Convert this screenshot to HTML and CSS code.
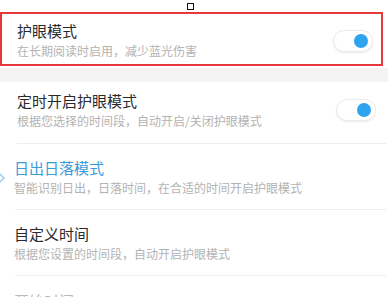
FILE: index.html
```html
<!DOCTYPE html>
<html lang="zh">
<head>
<meta charset="utf-8">
<link rel="stylesheet" href="styles.css">
</head>
<body>
<div class="handle"></div>
<div class="page">
  <div class="highlight">
    <div class="row row-first">
      <div class="text">
        <div class="title">护眼模式</div>
        <div class="sub">在长期阅读时启用，减少蓝光伤害</div>
      </div>
      <div class="toggle"><span class="knob"></span></div>
    </div>
  </div>
  <div class="band"></div>
  <div class="row row-second">
    <div class="text">
      <div class="title">定时开启护眼模式</div>
      <div class="sub">根据您选择的时间段，自动开启/关闭护眼模式</div>
    </div>
    <div class="toggle"><span class="knob"></span></div>
  </div>
  <div class="divider divider-wide"></div>
  <div class="row row-opt">
    <svg class="chev" width="6" height="12" viewBox="0 0 6 12"><path d="M0 2 L4 6 L0 10" fill="none" stroke="#8cc8ec" stroke-width="1.3"/></svg>
    <div class="text">
      <div class="title title-blue">日出日落模式</div>
      <div class="sub">智能识别日出，日落时间，在合适的时间开启护眼模式</div>
    </div>
  </div>
  <div class="divider"></div>
  <div class="row row-opt">
    <div class="text">
      <div class="title">自定义时间</div>
      <div class="sub">根据您设置的时间段，自动开启护眼模式</div>
    </div>
  </div>
  <div class="divider"></div>
  <div class="row row-time">
    <div class="faded">开始时间</div>
    <div class="value">0:00 <span class="arrow">›</span></div>
  </div>
</div>
</body>
</html>
```
FILE: styles.css
```css
html, body {
  margin: 0;
  padding: 0;
  background: #ffffff;
  overflow: hidden;
}
body {
  width: 390px;
  height: 297px;
  font-family: "Noto Sans CJK SC", "Noto Sans", sans-serif;
  position: relative;
}
.handle {
  position: absolute;
  left: 187px;
  top: 3px;
  width: 5px;
  height: 5px;
  border: 1px solid #111;
  background: #fff;
}
.page {
  padding-top: 12px;
}
.highlight {
  width: 379px;
  height: 50px;
  border: 2px solid #e8383d;
}
.row {
  display: flex;
  align-items: center;
  position: relative;
}
.text {
  flex: 1;
  display: flex;
  flex-direction: column;
  gap: 2px;
}
.title {
  font-size: 15px;
  line-height: 20px;
  color: #2a2a2a;
}
.title-blue {
  color: #3a9bd8;
}
.sub {
  font-size: 12px;
  line-height: 16px;
  color: #b3b3b3;
}
.row-first {
  height: 50px;
  padding-left: 15px;
  padding-right: 8px;
}
.row-first .text {
  padding-top: 2px;
}
.band {
  height: 14px;
  background: #f3f3f3;
  margin-top: 2px;
  width: 388px;
}
.row-second {
  padding: 9px 14px 14px 17px;
}
.toggle {
  width: 34px;
  height: 20px;
  border-radius: 11px;
  background: #fff;
  border: 1px solid #ececec;
  box-shadow: 0 1px 2px rgba(0,0,0,0.08);
  display: flex;
  align-items: center;
  justify-content: flex-end;
  padding-right: 4px;
  box-sizing: content-box;
}
.knob {
  width: 14px;
  height: 14px;
  border-radius: 50%;
  background: #2ea3ef;
}
.row-first .toggle {
  margin-top: 4px;
}
.divider {
  height: 1px;
  background: #ededed;
  margin-left: 15px;
  margin-right: 4px;
}
.divider-wide {
  margin-left: 17px;
}
.row-opt {
  padding: 14px 14px 13px 14px;
}
.chev {
  position: absolute;
  left: 0;
  top: 28px;
}
.row-time {
  padding: 14px 14px 0 14px;
  justify-content: space-between;
}
.faded {
  font-size: 15px;
  line-height: 20px;
  color: #b8b8b8;
}
.value {
  font-size: 12px;
  line-height: 20px;
  color: #c8c8c8;
}
.arrow {
  font-size: 16px;
}
```
